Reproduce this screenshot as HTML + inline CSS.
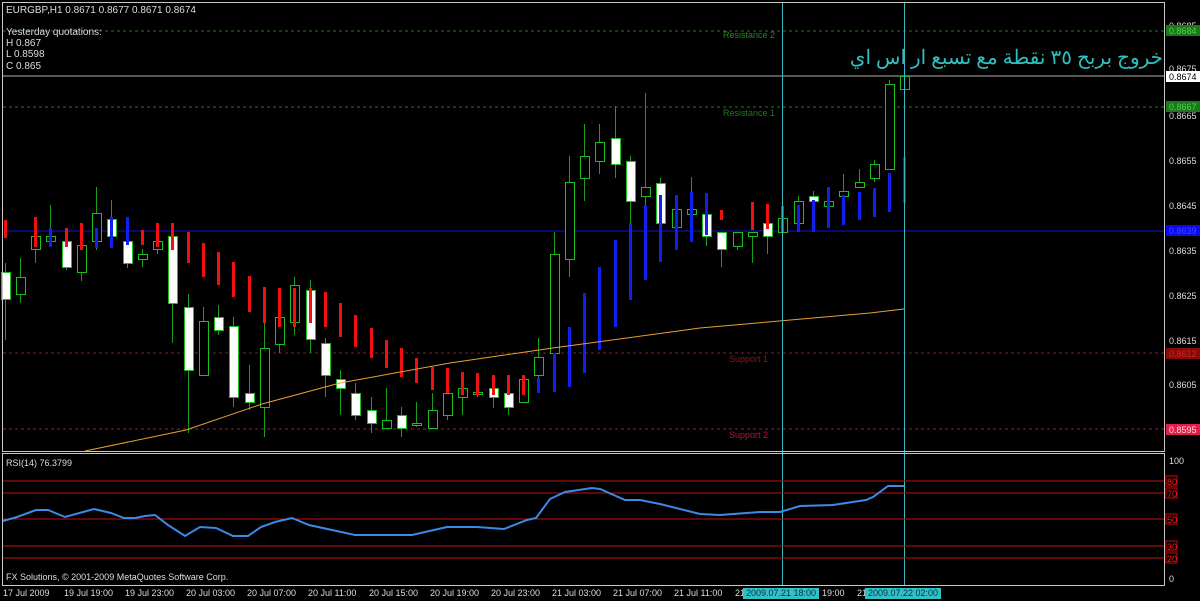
<!DOCTYPE html>
<html><head><meta charset="utf-8"><style>
html,body{margin:0;padding:0;background:#000;width:1200px;height:601px;overflow:hidden;position:relative}
svg{display:block}
text{font-family:"Liberation Sans",sans-serif}
#ar{position:absolute;right:37px;top:46px;direction:rtl;font-family:"Liberation Serif","DejaVu Serif",serif;font-size:20px;color:#2fc0c0;white-space:nowrap;line-height:24px}
</style></head><body>
<svg id="s" width="1200" height="601" viewBox="0 0 1200 601" xmlns="http://www.w3.org/2000/svg">
<rect width="1200" height="601" fill="#000"/>
<line x1="3" y1="31" x2="1164" y2="31" stroke="#1f7a1f" stroke-dasharray="3,3"/>
<line x1="3" y1="107" x2="1164" y2="107" stroke="#1f7a1f" stroke-dasharray="3,3"/>
<line x1="3" y1="353" x2="1164" y2="353" stroke="#8a1a1a" stroke-dasharray="3,3"/>
<line x1="3" y1="429" x2="1164" y2="429" stroke="#a01a3a" stroke-dasharray="3,3"/>
<line x1="3" y1="231" x2="1164" y2="231" stroke="#1414d0"/>
<line x1="3" y1="76" x2="1164" y2="76" stroke="#b0b0b0"/>
<text x="723" y="38" font-size="9" fill="#1f8a1f">Resistance 2</text>
<text x="723" y="116" font-size="9" fill="#1f7a1f">Resistance 1</text>
<text x="729" y="362" font-size="9" fill="#8a1a1a">Support 1</text>
<text x="729" y="438" font-size="9" fill="#b01a3a">Support 2</text>
<g id="c"></g>
<polyline points="85,451 186,430 262,404 340,383 450,363 553,348 700,328 870,313 904,309" fill="none" stroke="#e8a030" stroke-width="1"/>
<line x1="782.5" y1="3" x2="782.5" y2="586" stroke="#3bb8c0"/>
<line x1="904.5" y1="3" x2="904.5" y2="586" stroke="#3bb8c0"/>
<rect x="2.5" y="2.5" width="1162" height="449" fill="none" stroke="#c8c8c8"/>
<rect x="2.5" y="453.5" width="1162" height="132" fill="none" stroke="#c8c8c8"/>
<text x="6" y="13" font-size="10" fill="#ddd">EURGBP,H1  0.8671 0.8677 0.8671 0.8674</text>
<text x="6" y="35" font-size="10" fill="#ddd">Yesterday quotations:</text>
<text x="6" y="46" font-size="10" fill="#ddd">H 0.867</text>
<text x="6" y="57" font-size="10" fill="#ddd">L 0.8598</text>
<text x="6" y="69" font-size="10" fill="#ddd">C 0.865</text>
<g font-size="9" fill="#ddd">
<text x="1169" y="29">0.8685</text>
<rect x="1166" y="25" width="34" height="11" fill="#1a7a1a"/><text x="1169" y="34" fill="#5c5">0.8684</text>
<text x="1169" y="72">0.8675</text>
<rect x="1166" y="71" width="34" height="11" fill="#fff"/><text x="1169" y="80" fill="#000">0.8674</text>
<rect x="1166" y="101" width="34" height="11" fill="#1a7a1a"/><text x="1169" y="110" fill="#5c5">0.8667</text>
<text x="1169" y="119">0.8665</text>
<text x="1169" y="164">0.8655</text>
<text x="1169" y="209">0.8645</text>
<rect x="1166" y="225" width="34" height="11" fill="#0a0af0"/><text x="1169" y="234" fill="#44f">0.8639</text>
<text x="1169" y="254">0.8635</text>
<text x="1169" y="299">0.8625</text>
<text x="1169" y="344">0.8615</text>
<rect x="1166" y="348" width="34" height="11" fill="#8a0a0a"/><text x="1169" y="357" fill="#c22">0.8612</text>
<text x="1169" y="388">0.8605</text>
<rect x="1166" y="424" width="34" height="11" fill="#e0204a"/><text x="1169" y="433" fill="#fdd">0.8595</text>
</g>
<g stroke="#c01010">
<line x1="3" y1="481" x2="1164" y2="481"/><line x1="3" y1="493" x2="1164" y2="493"/>
<line x1="3" y1="519" x2="1164" y2="519"/><line x1="3" y1="546" x2="1164" y2="546"/>
<line x1="3" y1="558" x2="1164" y2="558"/>
</g>
<polyline fill="none" stroke="#3a8ae8" stroke-width="2" points="3,521 17,517 36,510 48,510 65,517 94,509 111,513 124,518 135,518 145,516 155,515 168,525 185,536 200,527 216,528 233,536 248,536 261,527 275,522 292,518 309,525 332,530 355,535 412,535 447,527 477,527 504,529 527,520 536,518 550,499 565,492 592,488 600,489 625,500 640,500 660,504 700,514 720,515 760,512 780,512 800,506 833,505 866,500 873,497 888,486 904,486"/>
<text x="6" y="466" font-size="9" fill="#ddd">RSI(14) 76.3799</text>
<text x="6" y="580" font-size="9" fill="#ddd">FX Solutions, © 2001-2009 MetaQuotes Software Corp.</text>
<g font-size="9" fill="#ddd">
<text x="1169" y="464">100</text>
<rect x="1166" y="476" width="11" height="10" fill="none" stroke="#d00"/><text x="1167" y="485" fill="#e22">80</text>
<rect x="1166" y="488" width="11" height="10" fill="none" stroke="#d00"/><text x="1167" y="497" fill="#e22">70</text>
<rect x="1166" y="514" width="11" height="10" fill="none" stroke="#d00"/><text x="1167" y="523" fill="#e22">50</text>
<rect x="1166" y="541" width="11" height="10" fill="none" stroke="#d00"/><text x="1167" y="550" fill="#e22">30</text>
<rect x="1166" y="553" width="11" height="10" fill="none" stroke="#d00"/><text x="1167" y="562" fill="#e22">20</text>
<text x="1169" y="582">0</text>
</g>
<g font-size="9" fill="#ddd">
<text x="3" y="596">17 Jul 2009</text>
<text x="64" y="596">19 Jul 19:00</text>
<text x="125" y="596">19 Jul 23:00</text>
<text x="186" y="596">20 Jul 03:00</text>
<text x="247" y="596">20 Jul 07:00</text>
<text x="308" y="596">20 Jul 11:00</text>
<text x="369" y="596">20 Jul 15:00</text>
<text x="430" y="596">20 Jul 19:00</text>
<text x="491" y="596">20 Jul 23:00</text>
<text x="552" y="596">21 Jul 03:00</text>
<text x="613" y="596">21 Jul 07:00</text>
<text x="674" y="596">21 Jul 11:00</text>
<text x="735" y="596">21</text>
<rect x="743" y="588" width="76" height="11" fill="#2fc0c8"/><text x="746" y="596" fill="#103040">2009.07.21 18:00</text>
<text x="822" y="596">19:00</text>
<text x="857" y="596">21</text>
<rect x="865" y="588" width="76" height="11" fill="#2fc0c8"/><text x="868" y="596" fill="#103040">2009.07.22 02:00</text>
</g>
</svg>
<div id="ar">خروج بربح ٣٥ نقطة مع تسبع ار اس اي</div>
<script>
var C=[[263,340,272,299,'W'],[258,303,277,294,'G'],[220,263,236,249,'G'],[205,247,236,241,'G'],[237,270,241,267,'W'],[242,281,245,272,'G'],[187,250,213,241,'G'],[200,248,219,236,'W'],[237,268,241,263,'W'],[249,267,254,259,'G'],[237,254,241,249,'G'],[232,343,236,303,'W'],[294,433,307,370,'W'],[307,375,321,375,'G'],[305,335,317,330,'W'],[317,407,326,397,'W'],[365,410,393,402,'W'],[323,437,348,407,'G'],[310,353,317,344,'G'],[277,335,285,322,'G'],[280,353,290,339,'W'],[338,397,343,375,'W'],[370,415,379,388,'W'],[383,420,393,415,'W'],[397,433,410,423,'W'],[388,428,420,428,'G'],[407,437,415,428,'W'],[402,427,423,425,'G'],[393,428,410,428,'G'],[385,420,393,415,'G'],[380,415,388,397,'G'],[373,397,392,394,'G'],[377,408,388,397,'W'],[377,415,393,407,'W'],[375,402,379,402,'G'],[338,393,357,375,'G'],[232,353,254,353,'G'],[156,277,182,259,'G'],[124,201,156,178,'G'],[124,174,142,161,'G'],[106,178,138,164,'W'],[156,223,161,201,'W'],[93,205,187,196,'G'],[178,223,183,223,'W'],[209,227,209,227,'G'],[177,214,209,214,'G'],[214,246,214,236,'W'],[232,267,232,249,'W'],[232,250,232,246,'G'],[232,263,232,236,'G'],[223,254,223,236,'W'],[214,232,218,232,'G'],[196,223,201,223,'G'],[191,201,196,201,'W'],[187,206,201,206,'G'],[174,196,191,196,'G'],[169,187,182,187,'G'],[160,182,164,178,'G'],[80,169,84,169,'G'],[76,89,76,89,'G']];
var B=[[0,220,238,'r'],[2,217,247,'r'],[3,228,247,'b'],[4,228,247,'r'],[5,223,250,'r'],[6,228,248,'b'],[7,217,248,'b'],[8,217,245,'b'],[9,230,245,'r'],[10,223,247,'r'],[11,223,250,'r'],[12,232,263,'r'],[13,243,277,'r'],[14,252,285,'r'],[15,262,297,'r'],[16,276,312,'r'],[17,287,323,'r'],[18,288,327,'r'],[19,288,327,'r'],[20,288,323,'r'],[21,292,327,'r'],[22,303,337,'r'],[23,315,347,'r'],[24,328,358,'r'],[25,340,368,'r'],[26,348,377,'r'],[27,358,383,'r'],[28,367,390,'r'],[29,368,393,'r'],[30,372,395,'r'],[31,373,395,'r'],[32,375,395,'r'],[33,375,395,'r'],[34,375,395,'r'],[35,378,393,'b'],[36,353,392,'b'],[37,327,387,'b'],[38,293,373,'b'],[39,267,350,'b'],[40,240,327,'b'],[41,223,300,'b'],[42,205,280,'b'],[43,195,262,'b'],[44,195,250,'b'],[45,192,242,'b'],[46,193,235,'b'],[47,210,220,'r'],[49,202,230,'r'],[50,204,229,'r'],[51,206,232,'r'],[52,205,232,'b'],[53,200,232,'b'],[54,187,228,'b'],[55,195,225,'b'],[56,192,220,'b'],[57,188,217,'b'],[58,173,212,'b'],[59,157,203,'b']];
var h='';
C.forEach(function(c,i){var x=4.5+15.25*i,xr=Math.round(x);
h+='<line x1="'+(xr+.5)+'" y1="'+c[0]+'" x2="'+(xr+.5)+'" y2="'+c[1]+'" stroke="#1aa01a"/>';
var bh=Math.max(1,c[3]-c[2]);
h+='<rect x="'+(xr-4+.5)+'" y="'+(c[2]+.5)+'" width="9" height="'+bh+'" fill="'+(c[4]=='W'?'#fff':'#000')+'" stroke="#1cc01c"/>';});
B.forEach(function(b){var xr=Math.round(4.5+15.25*b[0]);
h+='<rect x="'+(xr-1)+'" y="'+b[1]+'" width="3" height="'+(b[2]-b[1])+'" fill="'+(b[3]=='r'?'#f01010':'#1020f0')+'"/>';});
document.getElementById('c').innerHTML=h;
</script>
</body></html>
